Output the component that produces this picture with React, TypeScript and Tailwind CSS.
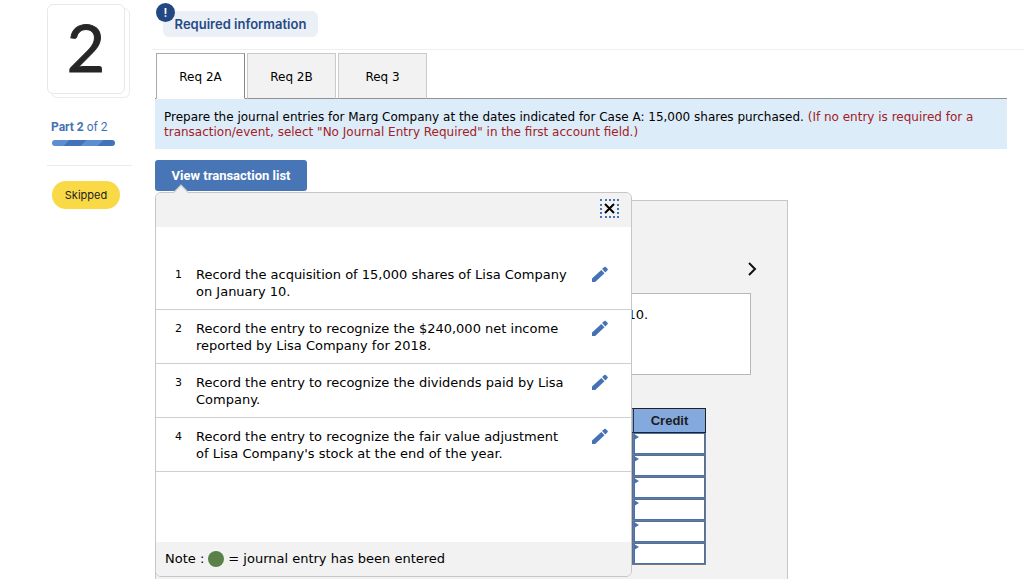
import { useState } from "react";

type Transaction = {
  id: number;
  text: string;
};

const tabs = ["Req 2A", "Req 2B", "Req 3"];

const transactions: Transaction[] = [
  { id: 1, text: "Record the acquisition of 15,000 shares of Lisa Company on January 10." },
  { id: 2, text: "Record the entry to recognize the $240,000 net income reported by Lisa Company for 2018." },
  { id: 3, text: "Record the entry to recognize the dividends paid by Lisa Company." },
  { id: 4, text: "Record the entry to recognize the fair value adjustment of Lisa Company's stock at the end of the year." },
];

const journalRows = [1, 2, 3, 4, 5, 6];

function PencilIcon() {
  return (
    <svg viewBox="0 0 16 16" className="size-4" fill="#4472b5" aria-hidden="true">
      <path d="M0 12.6V16h3.2l9.3-8.8-3.2-3.3z" />
      <path d="M10.1 3.1l3.2 3.3 2.2-2.1a1.1 1.1 0 0 0 0-1.5L13.8 1a1.1 1.1 0 0 0-1.5 0z" />
    </svg>
  );
}

function Sidebar() {
  return (
    <aside className="ml-[47px] w-[85px] shrink-0 font-[Roboto,sans-serif]">
      <div className="relative mt-1 h-[94px] w-[83px]">
        <div className="absolute top-1 left-1 h-[90px] w-[79px] rounded-md border border-[#ececec]" />
        <div className="relative flex h-[90px] w-[78px] items-center justify-center rounded-md border border-[#e8e8e8] bg-white pb-1 font-[Lato,sans-serif] text-[66px] leading-none text-[#262626] [-webkit-text-stroke:1px_#262626]">
          2
        </div>
      </div>
      <p className="mt-[21px] ml-1 text-[12px] leading-4 text-[#4472b5]">
        <b>Part 2</b> of 2
      </p>
      <div className="mt-[5px] ml-[5px] h-[6px] w-[63px] overflow-hidden rounded-full bg-[linear-gradient(135deg,#5b8fd2_0_25%,#4273b8_25%_50%,#5b8fd2_50%_75%,#4273b8_75%)]" />
      <hr className="mt-[19px] border-[#ebebeb]" />
      <span className="mt-[15px] ml-[5px] flex h-7 w-[68px] items-center justify-center rounded-full bg-[#fad947] font-[Inter,sans-serif] text-[11px] text-[#222]">
        Skipped
      </span>
    </aside>
  );
}

function TransactionList({ onClose }: { onClose: () => void }) {
  return (
    <div className="absolute -top-[9px] -left-px z-10 w-[477px] rounded-md border border-[#c6c6c6] bg-white">
      <div className="absolute -top-[6px] left-[19px] size-3 rotate-45 border-t border-l border-[#c6c6c6] bg-[#f2f2f2]" />
      <div className="relative flex h-[34px] items-start justify-end rounded-t-md bg-[#f2f2f2] pt-[6px] pr-3">
        <button
          type="button"
          aria-label="Close"
          onClick={onClose}
          className="flex size-[19px] items-center justify-center border-2 border-dotted border-[#4472b5]"
        >
          <svg viewBox="0 0 11 11" className="size-[11px]" stroke="#000" strokeWidth="2" aria-hidden="true">
            <path d="M1 1l9 9M10 1l-9 9" />
          </svg>
        </button>
      </div>
      <ul className="pt-[29px] pb-[70px]">
        {transactions.map((t) => (
          <li key={t.id} className="flex items-start border-b border-[#cfcfcf] pt-[10px] pr-[23px] pb-[9px] pl-[19px]">
            <span className="w-[21px] text-[11px] leading-[17px]">{t.id}</span>
            <p className="w-[374px] text-[13px] leading-[17px]">{t.text}</p>
            <button type="button" aria-label={`Edit entry ${t.id}`} className="ml-auto">
              <PencilIcon />
            </button>
          </li>
        ))}
      </ul>
      <div className="flex h-[34px] items-center gap-1 rounded-b-md bg-[#f2f2f2] pl-[9px] text-[13px]">
        <span>Note :</span>
        <span className="size-4 rounded-full bg-[#5a8248]" />
        <span>= journal entry has been entered</span>
      </div>
    </div>
  );
}

function JournalTable() {
  return (
    <table className="ml-8 w-[518px] table-fixed border-collapse">
      <thead>
        <tr className="h-6 bg-[#83a9df] font-[Liberation_Sans,sans-serif] text-[13px] text-[#1c1c1c]">
          <th className="border border-[#333]" />
          <th className="w-[72px] border border-[#333]" />
          <th className="w-[72px] border border-[#222] p-0 font-bold">Credit</th>
        </tr>
      </thead>
      <tbody>
        {journalRows.map((row) => (
          <tr key={row} className="h-[22px]">
            <td className="border border-[#777] bg-white" />
            <td className="border border-[#777] bg-white p-0">
              <input aria-label={`Debit ${row}`} className="block h-[21px] w-full border border-[#4472b5]" />
            </td>
            <td className="relative border border-[#777] bg-white p-0">
              <input aria-label={`Credit ${row}`} className="block h-[21px] w-full border border-[#4472b5]" />
              <span className="absolute top-px left-0 border-y-3 border-l-5 border-y-transparent border-l-[#4472b5]" />
            </td>
          </tr>
        ))}
      </tbody>
    </table>
  );
}

export default function App() {
  const [activeTab, setActiveTab] = useState("Req 2A");
  const [listOpen, setListOpen] = useState(true);

  return (
    <div className="flex min-h-screen bg-white font-[DejaVu_Sans,Verdana,sans-serif] text-black">
      <Sidebar />
      <main className="ml-5 flex min-w-0 flex-1 flex-col">
        <header className="border-b border-[#efefef] pt-[11px] pb-3 pl-[11px]">
          <div className="relative flex h-[26px] w-[155px] items-center justify-center rounded-md bg-[#ebf0f7] pt-px font-[Inter,sans-serif] text-[13px] font-semibold text-[#264a85]">
            Required information
            <span className="absolute -top-2 -left-[7px] flex size-[19px] items-center justify-center rounded-full bg-[#234783] text-[12px] text-white">
              !
            </span>
          </div>
        </header>

        <div className="mt-[3px] mr-[17px] ml-[3px] flex flex-1 flex-col">
          <div role="tablist" className="flex gap-[2px] border-b border-[#929292] pl-px">
            {tabs.map((tab) => (
              <button
                key={tab}
                type="button"
                role="tab"
                aria-selected={tab === activeTab}
                onClick={() => setActiveTab(tab)}
                className={`-mb-px h-[46px] w-[89px] border pt-[2px] text-[12px] ${
                  tab === activeTab
                    ? "border-[#aaa] border-r-[#888] border-b-white bg-white"
                    : "border-[#cacaca] border-b-[#929292] bg-[#f2f2f2]"
                }`}
              >
                {tab}
              </button>
            ))}
          </div>
          <p className="h-[50px] overflow-hidden bg-[#ddecf9] pt-[11px] pl-[9px] text-[12px] leading-[15px] whitespace-nowrap">
            Prepare the journal entries for Marg Company at the dates indicated for Case A: 15,000 shares purchased.{" "}
            <span className="text-[#a32024]">
              (If no entry is required for a
              <br />
              transaction/event, select "No Journal Entry Required" in the first account field.)
            </span>
          </p>
          <button
            type="button"
            onClick={() => setListOpen(!listOpen)}
            className="mt-[11px] h-[31px] w-[152px] rounded-[3px] bg-[#4775b5] font-[Roboto,sans-serif] text-[13px] font-bold text-white"
          >
            View transaction list
          </button>

          <section className="relative mt-[9px] w-[633px] flex-1 border border-b-0 border-[#c6c6c6] bg-[#f2f2f2]">
            {listOpen && <TransactionList onClose={() => setListOpen(false)} />}
            <div className="flex justify-end pt-[60px] pr-[30px]">
              <button type="button" aria-label="Next entry">
                <svg viewBox="0 0 10 16" className="h-4 w-[10px]" fill="none" stroke="#111" strokeWidth="2" aria-hidden="true">
                  <path d="M2 2l6 6-6 6" />
                </svg>
              </button>
            </div>
            <div className="mt-4 mr-9 ml-[14px] h-[82px] border border-[#b8b8b8] bg-white px-2 pt-3 text-[13px] leading-[17px]">
              {transactions[0].text}
            </div>
            <div className="mt-[33px]">
              <JournalTable />
            </div>
          </section>
        </div>
      </main>
    </div>
  );
}
